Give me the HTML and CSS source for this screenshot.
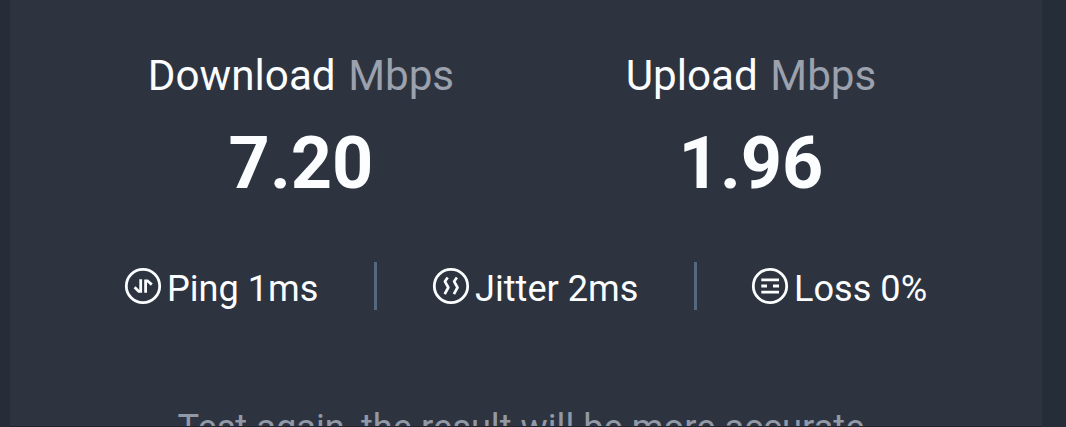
FILE: index.html
```html
<!DOCTYPE html>
<html lang="en">
<head>
<meta charset="utf-8">
<title>Speed test result</title>
<link rel="stylesheet" href="styles.css">
</head>
<body>
<main class="card">
  <section class="speeds">
    <div class="speed">
      <div class="label"><span class="name">Download</span> <span class="unit">Mbps</span></div>
      <div class="value">7.20</div>
    </div>
    <div class="speed">
      <div class="label"><span class="name">Upload</span> <span class="unit">Mbps</span></div>
      <div class="value">1.96</div>
    </div>
  </section>
  <section class="metrics">
    <div class="metric ping">
      <svg class="icon" viewBox="0 0 38 38"><circle cx="19" cy="19" r="16.7"/><path d="M16.7 12.2V24.4H14.8L10.6 20.3M21.6 25.8V13.8H23.4L27.8 17.6"/></svg>
      <span class="text">Ping 1ms</span>
    </div>
    <div class="metric jitter">
      <svg class="icon" viewBox="0 0 38 38"><circle cx="19" cy="19" r="16.7"/><path class="wave" d="M15.7 10.4L12.9 14.4L16.3 20.5L12.7 27.2M24.9 10.4L22.1 14.4L25.5 20.5L21.9 27.2"/></svg>
      <span class="text">Jitter 2ms</span>
    </div>
    <div class="metric loss">
      <svg class="icon" viewBox="0 0 38 38"><circle cx="19" cy="19" r="16.7"/><path d="M10.3 12.8H28M10.3 19H16M22 19H28M10.3 25.2H28"/></svg>
      <span class="text">Loss 0%</span>
    </div>
  </section>
  <p class="hint">Test again, the result will be more accurate</p>
</main>
</body>
</html>
```
FILE: styles.css
```css
* { box-sizing: border-box; }
body {
  margin: 0;
  height: 427px;
  padding: 0 24px 0 10px;
  overflow: hidden;
  background: #252d39;
  color: #fbfdff;
  font-family: Roboto, sans-serif;
}
.card {
  height: 427px;
  padding-top: 51px;
  overflow: hidden;
  background: #2d3440;
  border-bottom: 1px solid #20242d;
}
.speeds {
  display: grid;
  grid-template-columns: 450px 450px;
  justify-content: center;
  text-align: center;
}
.label { font-size: 42.2px; line-height: 50px; white-space: nowrap; }
.unit { color: #9ba1ad; margin-left: 2px; }
.value { margin-top: 21px; font-size: 72px; line-height: 84px; font-weight: 700; }
.metrics {
  display: grid;
  grid-template-columns: 310px 320px 288px;
  height: 48px;
  margin: 56px 0 0 57px;
}
.metric {
  display: flex;
  align-items: center;
  gap: 5px;
  border-right: 3px solid #56687e;
}
.metric.ping { padding-left: 57px; }
.metric.jitter { padding-left: 55px; }
.metric.loss { padding-left: 54px; border-right: 0; }
.icon {
  flex: none;
  width: 38px;
  height: 38px;
  fill: none;
  stroke: #fbfdff;
  stroke-width: 2.8;
}
.wave { stroke-width: 2.7; stroke-linejoin: round; }
.text { padding-top: 6px; font-size: 36.15px; line-height: 42px; white-space: nowrap; }
.hint {
  margin: 97px 10px 0 0;
  text-align: center;
  color: #9299a6;
  font-size: 36.25px;
  line-height: 42px;
  white-space: nowrap;
}
```
